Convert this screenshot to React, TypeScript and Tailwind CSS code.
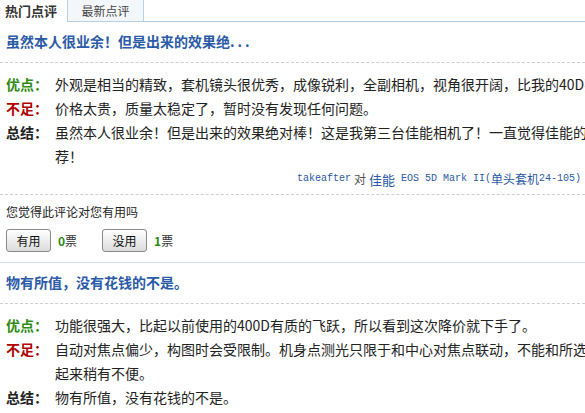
import React from 'react';

const cjk = "font-['Noto_Sans_CJK_SC',sans-serif]";
const mono = "font-['Liberation_Mono','Noto_Sans_CJK_SC',monospace]";

type Row = { label: string; color: string; lines: string[] };

const Review: React.FC<{ title: React.ReactNode; rows: Row[]; children?: React.ReactNode }> = ({ title, rows, children }) => {
    return (
        <div>
            <div className="h-[41px] pt-[9px] px-[6px] border-b border-dashed border-[#cfcfcf]">
                <h3 className="text-[14px] leading-[20px] font-bold text-[#2b5aa6] whitespace-nowrap">{title}</h3>
            </div>
            <div className="pt-[9px] px-[6px]">
                {rows.map((row, i) => (
                    <div key={i} className="flex text-[14px] leading-[24px] whitespace-nowrap">
                        <span className={`w-[49px] shrink-0 font-bold ${row.color}`}>{row.label}</span>
                        <div className="text-[#222]">
                            {row.lines.map((l, j) => (
                                <div key={j} className="h-[24px]">{l}</div>
                            ))}
                        </div>
                    </div>
                ))}
            </div>
            {children}
        </div>
    );
};

const VoteButton: React.FC<{ label: string }> = ({ label }) => (
    <button className="w-[45px] h-[23px] border border-[#8a8a8a] rounded-[3px] bg-gradient-to-b from-white to-[#dcdcdc] text-[12px] text-[#111] leading-none">
        {label}
    </button>
);

export default function App() {
    return (
        <div className={`w-[585px] h-[413px] overflow-hidden bg-white ${cjk}`}>
            <div className="flex h-[22px] items-stretch">
                <div className="w-[67px] flex items-center pl-[5px] text-[13px] font-bold text-[#333] bg-white">热门点评</div>
                <div className="w-[77px] flex items-center justify-center text-[12px] text-[#444] bg-[#f4f7fa] border-x border-b border-[#b5d1e8]">最新点评</div>
                <div className="flex-1 border-b border-[#a9cbe3]"></div>
            </div>

            <Review
                title={<>虽然本人很业余！但是出来的效果绝<span className="tracking-[3px]">...</span></>}
                rows={[
                    { label: '优点：', color: 'text-[#2e8b14]', lines: ['外观是相当的精致，套机镜头很优秀，成像锐利，全副相机，视角很开阔，比我的40D要好很多。'] },
                    { label: '不足：', color: 'text-[#b00000]', lines: ['价格太贵，质量太稳定了，暂时没有发现任何问题。'] },
                    { label: '总结：', color: 'text-[#222]', lines: ['虽然本人很业余！但是出来的效果绝对棒！这是我第三台佳能相机了！一直觉得佳能的相机值得推', '荐！'] },
                ]}
            >
                <div className="h-[27px] pt-[3px] pr-[4px] border-b border-dashed border-[#cfcfcf]">
                    <div className="h-[16px] flex items-center justify-end text-[#2b5aa6] whitespace-nowrap leading-none">
                        <span className={`${mono} text-[10px]`}>takeafter</span>
                        <span className="text-[12px] text-[#555] px-[3px]">对</span>
                        <span className="text-[13px]">佳能</span>
                        <span className={`${mono} text-[10px] whitespace-pre`}> EOS 5D Mark II(</span>
                        <span className="text-[12px]">单头套机</span>
                        <span className={`${mono} text-[10px]`}>24-105)</span>
                    </div>
                </div>
                <div className="h-[68px] px-[6px] pt-[8px] border-b border-[#d3e0ea]">
                    <p className="h-[18px] text-[12px] leading-[18px] text-[#222]">您觉得此评论对您有用吗</p>
                    <div className="h-[23px] flex items-center mt-[8px]">
                        <VoteButton label="有用" />
                        <span className="ml-[7px] text-[12px] leading-none text-[#333]"><b className="text-[#2e8b14]">0</b>票</span>
                        <span className="ml-[25px] flex"><VoteButton label="没用" /></span>
                        <span className="ml-[7px] text-[12px] leading-none text-[#333]"><b className="text-[#2e8b14]">1</b>票</span>
                    </div>
                </div>
            </Review>

            <Review
                title="物有所值，没有花钱的不是。"
                rows={[
                    { label: '优点：', color: 'text-[#2e8b14]', lines: ['功能很强大，比起以前使用的400D有质的飞跃，所以看到这次降价就下手了。'] },
                    { label: '不足：', color: 'text-[#b00000]', lines: ['自动对焦点偏少，构图时会受限制。机身点测光只限于和中心对焦点联动，不能和所选对焦点联动，用', '起来稍有不便。'] },
                    { label: '总结：', color: 'text-[#222]', lines: ['物有所值，没有花钱的不是。'] },
                ]}
            />
        </div>
    );
}
